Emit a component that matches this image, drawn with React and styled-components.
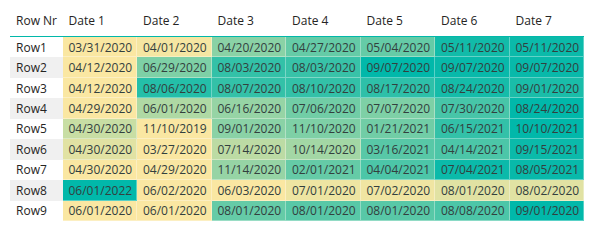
import React from "react";
import styled, { createGlobalStyle } from "styled-components";

const GlobalStyle = createGlobalStyle`
	html, body {
		margin: 0;
		padding: 0;
		background: #ffffff;
	}
	body {
		font-family: "Open Sans", "Noto Sans", "Liberation Sans", sans-serif;
	}
`;

const LOW = [250, 231, 162];
const HIGH = [1, 184, 170];

const scale = (t) => {
	const c = LOW.map((v, i) => Math.round(v + (HIGH[i] - v) * t));
	return `rgb(${c[0]}, ${c[1]}, ${c[2]})`;
};

// each cell: [date, position on the yellow -> teal scale]
const rows = [
	["Row1", [["03/31/2020", 0], ["04/01/2020", 0.02], ["04/20/2020", 0.45], ["04/27/2020", 0.6], ["05/04/2020", 0.6], ["05/11/2020", 0.93], ["05/11/2020", 0.96]]],
	["Row2", [["04/12/2020", 0], ["06/29/2020", 0.5], ["08/03/2020", 0.8], ["08/03/2020", 0.78], ["09/07/2020", 1], ["09/07/2020", 0.97], ["09/07/2020", 0.97]]],
	["Row3", [["04/12/2020", 0], ["08/06/2020", 0.86], ["08/07/2020", 0.8], ["08/10/2020", 0.8], ["08/17/2020", 0.82], ["08/24/2020", 0.92], ["09/01/2020", 0.9]]],
	["Row4", [["04/29/2020", 0], ["06/01/2020", 0.3], ["06/16/2020", 0.4], ["07/06/2020", 0.55], ["07/07/2020", 0.5], ["07/30/2020", 0.72], ["08/24/2020", 1]]],
	["Row5", [["04/30/2020", 0.2], ["11/10/2019", 0], ["09/01/2020", 0.45], ["11/10/2020", 0.5], ["01/21/2021", 0.55], ["06/15/2021", 0.8], ["10/10/2021", 1]]],
	["Row6", [["04/30/2020", 0.1], ["03/27/2020", 0], ["07/14/2020", 0.25], ["10/14/2020", 0.35], ["03/16/2021", 0.65], ["04/14/2021", 0.7], ["09/15/2021", 0.96]]],
	["Row7", [["04/30/2020", 0], ["04/29/2020", 0], ["11/14/2020", 0.4], ["02/01/2021", 0.6], ["04/04/2021", 0.7], ["07/04/2021", 0.96], ["08/05/2021", 0.97]]],
	["Row8", [["06/01/2022", 1], ["06/02/2020", 0], ["06/03/2020", 0], ["07/01/2020", 0.05], ["07/02/2020", 0.04], ["08/01/2020", 0.1], ["08/02/2020", 0.1]]],
	["Row9", [["06/01/2020", 0], ["06/01/2020", 0], ["08/01/2020", 0.6], ["08/01/2020", 0.65], ["08/01/2020", 0.65], ["08/08/2020", 0.7], ["09/01/2020", 1]]],
];

const headers = ["Row Nr", "Date 1", "Date 2", "Date 3", "Date 4", "Date 5", "Date 6", "Date 7"];

const App = () => {
	return (
		<Page>
			<GlobalStyle />
			<Table>
				{headers.map((h) => (
					<Head key={h}>{h}</Head>
				))}
				{rows.map(([name, cells], r) => (
					<React.Fragment key={name}>
						<RowName $shaded={r % 2 === 1}>{name}</RowName>
						{cells.map(([date, t], c) => (
							<Cell key={c} $bg={scale(t)}>
								{date}
							</Cell>
						))}
					</React.Fragment>
				))}
			</Table>
		</Page>
	);
};

export default App;

const Page = styled.div`
	width: 600px;
	height: 240px;
	box-sizing: border-box;
	padding: 7px 0 0 10px;
	overflow: hidden;
`;

const Table = styled.div`
	display: grid;
	grid-template-columns: 52.5px repeat(7, 74.5px);
	grid-template-rows: 30px;
	grid-auto-rows: 20.45px;
	font-size: 12px;
	color: #333333;
`;

const Head = styled.div`
	display: flex;
	align-items: center;
	padding: 0 6px 2px;
	border-bottom: 1px solid #01b8aa;
	color: #252423;
	white-space: nowrap;
`;

const RowName = styled.div`
	display: flex;
	align-items: center;
	padding-left: 6px;
	background: ${(p) => (p.$shaded ? "#f0f0f0" : "#ffffff")};
	color: #252423;
`;

const Cell = styled.div`
	display: flex;
	align-items: center;
	padding-left: 6px;
	background: ${(p) => p.$bg};
	box-shadow: inset -1px -1px 0 rgba(255, 255, 255, 0.35);
	color: #33403e;
	white-space: nowrap;
`;
